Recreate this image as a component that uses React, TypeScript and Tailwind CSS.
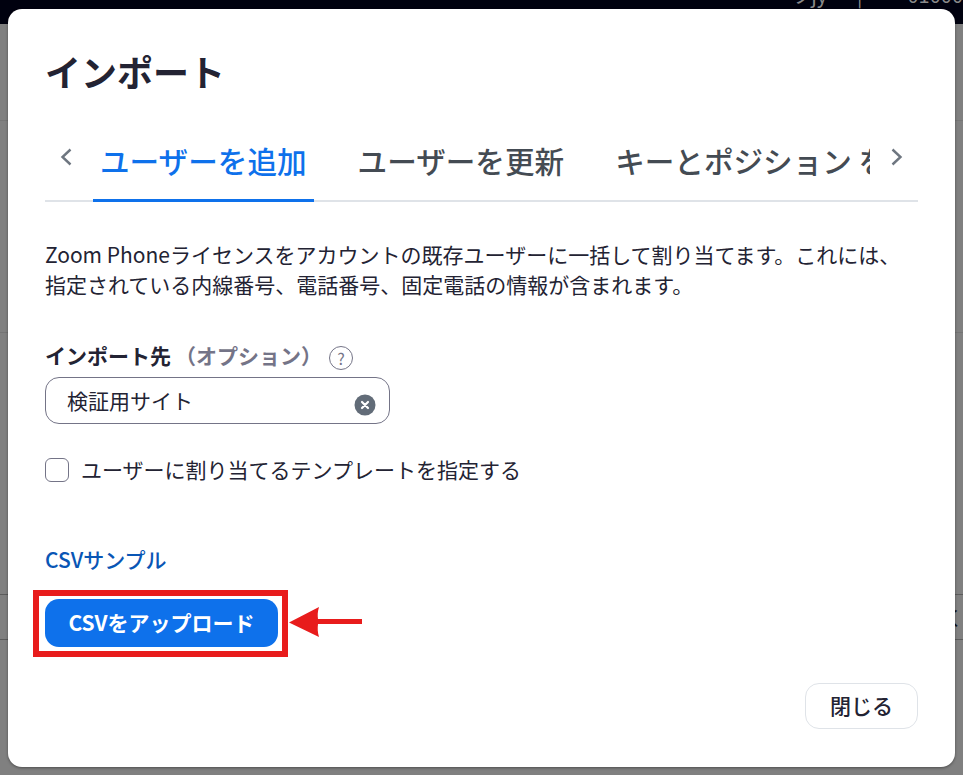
import React from 'react';

const font = { fontFamily: '"Noto Sans CJK JP", "Noto Sans", sans-serif' };

const Backdrop: React.FC = () => (
  <div className="absolute inset-0 bg-[#808080]">
    <div className="flex h-6 justify-end overflow-hidden bg-[#00010f] text-[20px] leading-[20px] text-[#8a8a8a]">
      <span className="-mt-[15px] mr-[30px]">ヲjy</span>
      <span className="-mt-[15px] mr-[45px]">|</span>
      <span className="-mt-[15px]">01000</span>
    </div>
    <div className="h-[97px] border-b border-[#767676]" />
    <div className="h-[212px] border-b border-[#747474]" />
    <div className="h-[262px] border-b border-[#5c5c5c]" />
    <div className="flex h-[45px] justify-end border-b border-[#5c5c5c] text-[20px] leading-[45px] text-[#111]">
      <span>く</span>
    </div>
  </div>
);

const App: React.FC = () => {
  return (
    <div style={font} className="relative h-[775px] w-[963px] overflow-hidden">
      <Backdrop />

      <div className="absolute left-2 top-[9px] flex h-[758px] w-[947px] flex-col rounded-[14px] bg-white px-[37px] pt-[37px] shadow-[0_1px_3px_rgba(0,0,0,0.4)]">
        <h1 className="text-[36px] font-bold leading-[50px] text-[#232333]">インポート</h1>

        <div className="mt-[45px] flex h-[61px] items-start border-b-2 border-[#dfe3e8]">
          <button className="mt-[7px] flex h-[18px] w-[48px] items-center justify-start pl-[15px]">
            <svg width="12" height="18" viewBox="0 0 12 18" fill="none">
              <path d="M10.5 1.5L2.5 9l8 7.5" stroke="#6e7680" strokeWidth="2.4" />
            </svg>
          </button>
          <div className="flex h-[61px] w-[777px] gap-[37px] overflow-hidden whitespace-nowrap text-[29.6px] font-medium leading-[40px]">
            <div className="h-[61px] shrink-0 border-b-[3px] border-[#0e71eb] px-[7px] text-[#0e71eb]">ユーザーを追加</div>
            <div className="shrink-0 px-[7px] text-[#444b53]">ユーザーを更新</div>
            <div className="shrink-0 px-[7px] text-[#444b53]">キーとポジション を更新</div>
          </div>
          <button className="mt-[7px] flex h-[18px] w-[48px] items-center justify-start pl-[21px]">
            <svg width="12" height="18" viewBox="0 0 12 18" fill="none">
              <path d="M1.5 1.5L9.5 9l-8 7.5" stroke="#6e7680" strokeWidth="2.4" />
            </svg>
          </button>
        </div>

        <p className="mt-[37px] text-[21px] leading-[30px] text-[#232333]">
          Zoom Phoneライセンスをアカウントの既存ユーザーに一括して割り当てます。これには、
          <br />
          指定されている内線番号、電話番号、固定電話の情報が含まれます。
        </p>

        <div className="mt-[43px] flex h-7 items-center text-[21px] font-bold text-[#232333]">
          インポート先<span className="ml-[4px] text-[#747487]">（オプション）</span>
          <span className="ml-[7px] mt-[4px] flex h-6 w-6 items-center justify-center rounded-full border border-[#747487] text-[16px] font-normal text-[#747487]">
            ?
          </span>
        </div>

        <div className="mt-[7px] flex h-[47px] w-[345px] items-center justify-between rounded-[14px] border border-[#747487] pl-[21px] pr-[13px] text-[21px] text-[#232333]">
          <span>検証用サイト</span>
          <svg width="22" height="22" viewBox="0 0 22 22" className="mt-2">
            <circle cx="11" cy="11" r="10.5" fill="#626c78" />
            <path d="M8 8l6 6M14 8l-6 6" stroke="#fff" strokeWidth="2.2" strokeLinecap="round" />
          </svg>
        </div>

        <label className="mt-[32px] flex h-7 items-center gap-[12px] text-[21px] text-[#232333]">
          <span className="h-6 w-6 rounded-[6px] border border-[#747487] bg-white" />
          ユーザーに割り当てるテンプレートを指定する
        </label>

        <a className="mt-[61px] h-7 text-[21px] font-medium leading-7 text-[#0956b5]">CSVサンプル</a>

        <div className="-ml-[12px] mt-[17px] h-[67px] w-[255px] border-[6px] border-[#e81c1c] px-[6px] pt-[3px]">
          <button className="h-12 w-[233px] rounded-[14px] bg-[#0e71eb] text-[21px] font-bold text-white">
            CSVをアップロード
          </button>
        </div>

        <div className="mt-[26px] flex justify-end">
          <button className="h-[46px] w-[113px] rounded-[14px] border border-[#dfe3e8] bg-white text-[21px] font-medium text-[#232333]">
            閉じる
          </button>
        </div>
      </div>

      {/* red arrow annotation */}
      <svg className="absolute left-[288px] top-[606px]" width="76" height="32" viewBox="0 0 76 32">
        <path d="M1 16.5L31 1C29.5 6 29.5 9 30 13H74V18H30C29.5 22 29.5 26 31 31Z" fill="#e81c1c" />
      </svg>
    </div>
  );
};

export default App;
